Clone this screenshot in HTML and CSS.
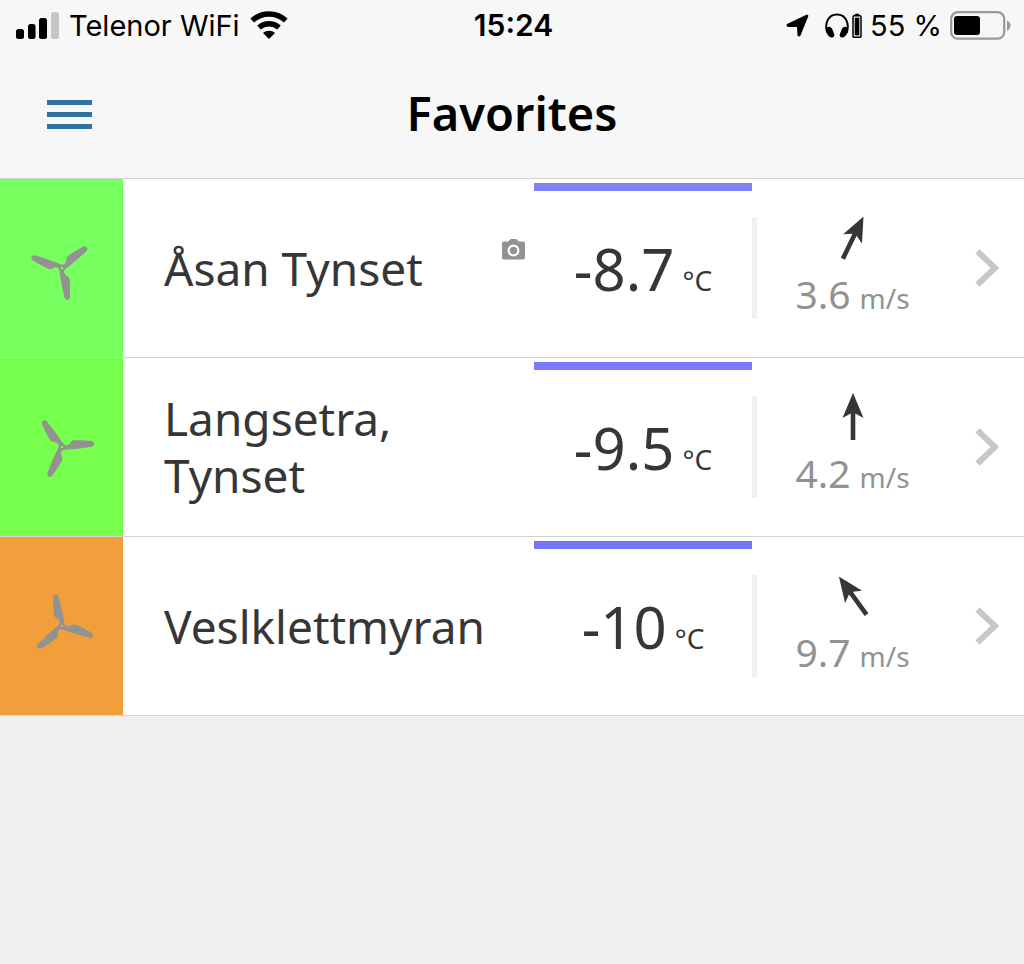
FILE: index.html
```html
<!DOCTYPE html>
<html lang="en">
<head>
    <meta charset="UTF-8">
    <meta name="viewport" content="width=device-width, initial-scale=1.0">
    <title>Favorites</title>
    <link rel="stylesheet" href="styles.css">
</head>
<body>
    <!-- shared shapes -->
    <svg class="defs" aria-hidden="true">
        <symbol id="fan" viewBox="-34 -34 68 68">
            <g id="blade">
                <path d="M-9 -29C-8.500 -32 -5 -33 -3.400 -29.500L-.5 -18L2.500 -3L-1.500 -2L-3 -6L-7.500 -9.500C-8.500 -12 -9 -21 -9 -29Z"/>
            </g>
            <use href="#blade" transform="rotate(120)"/>
            <use href="#blade" transform="rotate(240)"/>
            <path fill-rule="evenodd" d="M0 -3.500a3.500 3.500 0 1 1 0 7a3.500 3.500 0 1 1 0 -7ZM0 -1.200a1.200 1.200 0 1 0 0 2.400a1.200 1.200 0 1 0 0 -2.400Z"/>
        </symbol>
        <symbol id="arrow" viewBox="-24 -24 48 48">
            <path d="M0 -24L10.500 1L2.300 -3.500V23H-2.300V-3.500L-10.500 1Z"/>
        </symbol>
        <symbol id="chevron" viewBox="0 0 24 38">
            <path d="M2.500 2.500L20 19L2.500 35.500" fill="none" stroke="currentColor" stroke-width="6"/>
        </symbol>
    </svg>

    <header>
        <div class="status-bar">
            <div class="status-left">
                <svg width="43" height="27" viewBox="0 0 43 27">
                    <rect x="0" y="17" width="8" height="10" rx="2.500"/>
                    <rect x="12" y="12" width="7.500" height="15" rx="2.500"/>
                    <rect x="23" y="6" width="8" height="21" rx="2.500"/>
                    <rect x="35" y="0" width="8" height="27" rx="2.500" fill="#c6c6c6"/>
                </svg>
                <span>Telenor WiFi</span>
                <svg width="38" height="28" viewBox="0 0 38 28">
                    <path d="M2.200 9.500C12 .8 26 .8 35.800 9.500" fill="none" stroke="#000" stroke-width="5.500"/>
                    <path d="M9 16.500C15 11.500 23 11.500 29 16.500" fill="none" stroke="#000" stroke-width="5.500"/>
                    <path d="M13 22C16.500 19 21.500 19 25 22L19 28Z"/>
                </svg>
            </div>
            <time class="clock">15:24</time>
            <div class="status-right">
                <svg class="location" width="23" height="23" viewBox="0 0 23 23">
                    <path d="M1 10L20.500 .8Q22.800 .3 22.200 2.600L14.500 21.500Q13 23.500 11.500 21.500L11 13H2Q-.5 12 1 10Z"/>
                </svg>
                <svg width="37" height="25" viewBox="0 0 37 25">
                    <path d="M2.500 20C-1 11 3 1.500 12 1.500S25 11 21.500 20" fill="none" stroke="#000" stroke-width="2"/>
                    <path d="M1.500 14.500Q5 12.500 7 15.500L9.500 22Q9 25 6 24.500Q2 23 1 17ZM22.500 14.500Q19 12.500 17 15.500L14.500 22Q15 25 18 24.500Q22 23 23 17Z"/>
                    <path d="M29.500 2Q29.500 .5 32 .5T34.500 2Z"/>
                    <rect x="28" y="2.800" width="8" height="21.500" rx="1" fill="none" stroke="#000" stroke-width="1.500"/>
                    <rect x="29.700" y="4.700" width="4.600" height="17.700"/>
                </svg>
                <span>55 %</span>
                <svg width="61" height="29" viewBox="0 0 61 29">
                    <rect x="1.200" y="1.200" width="53" height="26.500" rx="6.500" fill="none" stroke="#999" stroke-width="2.200"/>
                    <rect x="4" y="5" width="26" height="19" rx="3"/>
                    <path d="M57 9.500Q60.500 11 60.500 14.500T57 19.500Z" fill="#999"/>
                </svg>
            </div>
        </div>
        <div class="title-bar">
            <button type="button" class="menu" aria-label="Menu"><i></i><i></i><i></i></button>
            <h1>Favorites</h1>
        </div>
    </header>

    <ul class="stations">
        <li>
            <a href="#" class="station">
                <span class="wind-color light"><svg class="fan"><use href="#fan"/></svg></span>
                <span class="name">Åsan Tynset</span>
                <svg class="camera" viewBox="0 0 23 21">
                    <path fill-rule="evenodd" d="M2 2.500H6.500L8 .5Q8.500 0 9.500 0H13.500Q14.500 0 15 .5L16.500 2.500H21Q23 2.500 23 4.500V18.500Q23 20.500 21 20.500H2Q0 20.500 0 18.500V4.500Q0 2.500 2 2.500ZM11.500 5.500a6 6 0 1 0 0 12a6 6 0 1 0 0 -12Z"/>
                    <circle cx="11.500" cy="11.500" r="3.700"/>
                </svg>
                <span class="temp t1"><b>-8.7</b> <small>°C</small></span>
                <span class="wind"><svg class="arrow ne"><use href="#arrow"/></svg><span class="speed"><b>3.6</b> <small>m/s</small></span></span>
                <svg class="chevron"><use href="#chevron"/></svg>
            </a>
        </li>
        <li>
            <a href="#" class="station">
                <span class="wind-color gentle"><svg class="fan"><use href="#fan"/></svg></span>
                <span class="name">Langsetra, Tynset</span>
                <span class="temp t2"><b>-9.5</b> <small>°C</small></span>
                <span class="wind"><svg class="arrow"><use href="#arrow"/></svg><span class="speed"><b>4.2</b> <small>m/s</small></span></span>
                <svg class="chevron"><use href="#chevron"/></svg>
            </a>
        </li>
        <li>
            <a href="#" class="station">
                <span class="wind-color fresh"><svg class="fan"><use href="#fan"/></svg></span>
                <span class="name">Veslklettmyran</span>
                <span class="temp t3"><b>-10</b> <small>°C</small></span>
                <span class="wind"><svg class="arrow nw"><use href="#arrow"/></svg><span class="speed"><b>9.7</b> <small>m/s</small></span></span>
                <svg class="chevron"><use href="#chevron"/></svg>
            </a>
        </li>
    </ul>
</body>
</html>
```
FILE: styles.css
```css
* {
    box-sizing: border-box;
}
body {
    margin: 0;
    background-color: #f0f0f0;
    color: #363636;
    font-family: "Noto Sans", sans-serif;
}
.defs {
    display: none;
}
header {
    background-color: #f7f7f7;
    border-bottom: 1px solid #d2d2d2;
    color: #000;
}
.status-bar {
    display: grid;
    grid-template-columns: 1fr auto 1fr;
    align-items: center;
    height: 50px;
    padding: 0 13px 0 16px;
    font-family: Inter, sans-serif;
    font-size: 29px;
}
.status-left, .status-right {
    display: flex;
    align-items: center;
    gap: 10px;
}
.status-right {
    justify-content: flex-end;
    gap: 8px;
}
.location {
    margin-right: 8px;
}
.clock {
    font-size: 30px;
    font-weight: 600;
}
.title-bar {
    display: grid;
    grid-template-columns: 92px 1fr 92px;
    align-items: center;
    height: 128px;
    padding-bottom: 2px;
}
.menu {
    display: flex;
    flex-direction: column;
    gap: 7px;
    width: 45px;
    margin-left: 47px;
    padding: 2px 0 0;
    border: none;
    background: none;
    cursor: pointer;
}
.menu i {
    height: 5px;
    background-color: #3173a0;
}
h1 {
    margin: 0;
    text-align: center;
    font-size: 47px;
    font-weight: 600;
    line-height: 64px;
}
.stations {
    margin: 0;
    padding: 0;
    list-style: none;
}
.station {
    display: grid;
    grid-template-columns: 123px 1fr auto 218px 201px 71px;
    grid-template-rows: 178px;
    align-items: center;
    background-color: #fff;
    color: inherit;
    text-decoration: none;
}
.stations li {
    border-bottom: 1px solid #d2d2d2;
}
.wind-color {
    display: flex;
    align-items: center;
    justify-content: center;
    height: 100%;
}
.light {
    background-color: #77ff5f;
}
.gentle {
    background-color: #76ff4c;
}
.fresh {
    background-color: #f09f3a;
}
.fan {
    width: 68px;
    height: 68px;
    fill: #929292;
}
.light .fan {
    transform: rotate(62deg);
}
.gentle .fan {
    transform: rotate(-24deg);
}
.name {
    padding-left: 41px;
    font-size: 46px;
    line-height: 57px;
}
.camera {
    width: 23px;
    height: 21px;
    margin: 0 9px 38px 0;
    fill: #929292;
}
.temp {
    display: flex;
    grid-column: 4;
    align-items: baseline;
    justify-content: center;
    gap: 8px;
    height: 170px;
    padding-top: 38px;
    border-top: 8px solid;
}
.t1 {
    border-color: #8282f8;
}
.t2 {
    border-color: #7b7bfa;
}
.t3 {
    border-color: #7676f8;
}
.temp b {
    color: #363636;
    font-size: 58px;
}
b {
    font-weight: 400;
}
small {
    font-size: 28px;
}
.wind {
    display: flex;
    flex-direction: column;
    align-items: center;
    height: 102px;
    padding-right: 5px;
    border-left: 5px solid #f0f0f0;
    color: #929292;
}
.speed {
    display: flex;
    align-items: baseline;
    gap: 9px;
    margin-top: 5px;
}
.wind b {
    font-size: 39px;
}
.arrow {
    width: 48px;
    height: 48px;
    margin-top: -3px;
    overflow: visible;
    fill: #363636;
}
.ne {
    transform: rotate(26deg);
}
.nw {
    transform: rotate(-36deg);
}
.chevron {
    width: 24px;
    height: 38px;
    margin-left: 22px;
    color: #c7c7c7;
}
```
